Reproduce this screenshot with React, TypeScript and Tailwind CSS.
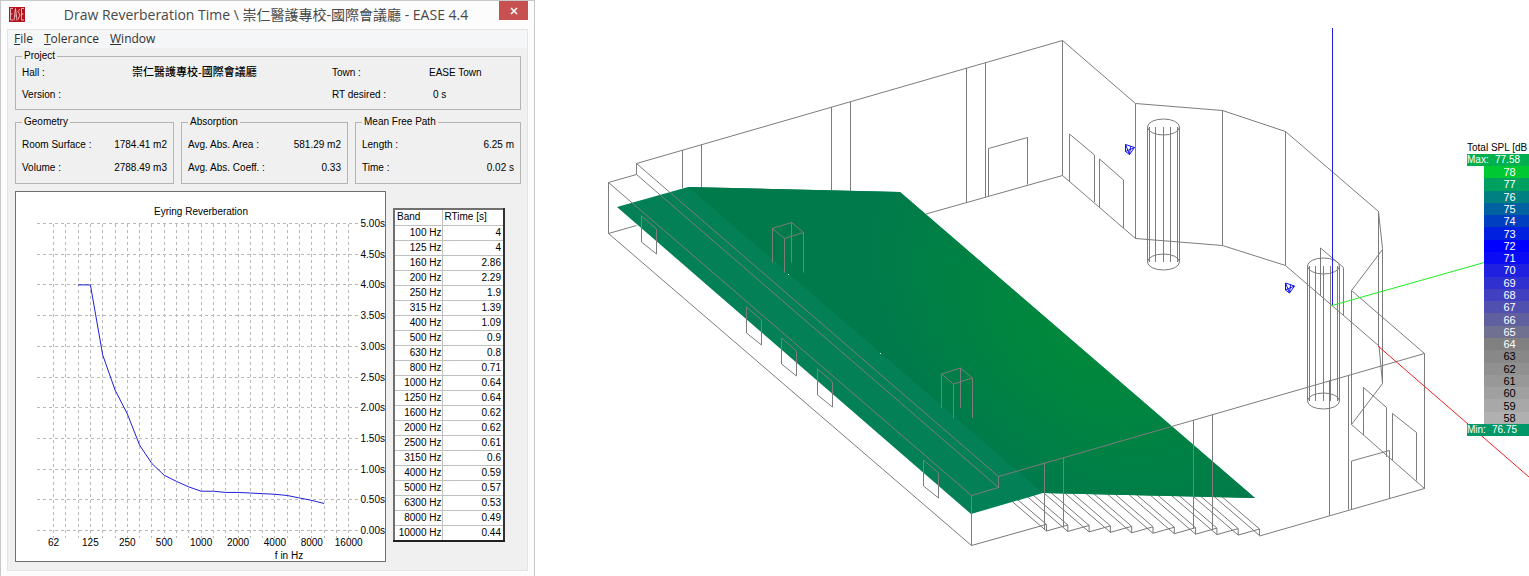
import React from 'react';

interface Field {
  label: string;
  value: string;
}

interface Band {
  freq: string;
  time: number;
}

interface Level {
  db: number;
  className: string;
}

const menus = ['File', 'Tolerance', 'Window'];

const bands: Band[] = [
  { freq: '100', time: 4 },
  { freq: '125', time: 4 },
  { freq: '160', time: 2.86 },
  { freq: '200', time: 2.29 },
  { freq: '250', time: 1.9 },
  { freq: '315', time: 1.39 },
  { freq: '400', time: 1.09 },
  { freq: '500', time: 0.9 },
  { freq: '630', time: 0.8 },
  { freq: '800', time: 0.71 },
  { freq: '1000', time: 0.64 },
  { freq: '1250', time: 0.64 },
  { freq: '1600', time: 0.62 },
  { freq: '2000', time: 0.62 },
  { freq: '2500', time: 0.61 },
  { freq: '3150', time: 0.6 },
  { freq: '4000', time: 0.59 },
  { freq: '5000', time: 0.57 },
  { freq: '6300', time: 0.53 },
  { freq: '8000', time: 0.49 },
  { freq: '10000', time: 0.44 }
];

const octaves = ['62', '125', '250', '500', '1000', '2000', '4000', '8000', '16000'];

const levels: Level[] = [
  { db: 78, className: 'bg-[#00c832] text-white' },
  { db: 77, className: 'bg-[#00a060] text-white' },
  { db: 76, className: 'bg-[#008080] text-white' },
  { db: 75, className: 'bg-[#0060a0] text-white' },
  { db: 74, className: 'bg-[#0040c0] text-white' },
  { db: 73, className: 'bg-[#0020e0] text-white' },
  { db: 72, className: 'bg-[#0000ff] text-white' },
  { db: 71, className: 'bg-[#0c0cf4] text-white' },
  { db: 70, className: 'bg-[#2020e0] text-white' },
  { db: 69, className: 'bg-[#3030d0] text-white' },
  { db: 68, className: 'bg-[#4040c0] text-white' },
  { db: 67, className: 'bg-[#5050b0] text-white' },
  { db: 66, className: 'bg-[#6060a0] text-white' },
  { db: 65, className: 'bg-[#707090] text-white' },
  { db: 64, className: 'bg-[#808080] text-white' },
  { db: 63, className: 'bg-[#888888] text-black' },
  { db: 62, className: 'bg-[#909090] text-black' },
  { db: 61, className: 'bg-[#989898] text-black' },
  { db: 60, className: 'bg-[#a0a0a0] text-black' },
  { db: 59, className: 'bg-[#a8a8a8] text-black' },
  { db: 58, className: 'bg-[#b0b0b0] text-black' }
];

// Chart scale: third-octave steps on x, seconds on y
const chartX = (step: number) => 37.5 + step * 12.3;
const chartY = (seconds: number) => 338.5 - seconds * 61.4;

const Group = ({ title, fields }: { title: string; fields: Field[] }) => (
  <fieldset className="border border-[#b4b4b4] px-1.5 pb-1">
    <legend className="px-0.5 leading-[10px]">{title}</legend>
    <dl className="pt-1.5">
      {fields.map((field) => (
        <div key={field.label} className="flex h-[23px] items-center justify-between">
          <dt>{field.label}</dt>
          <dd>{field.value}</dd>
        </div>
      ))}
    </dl>
  </fieldset>
);

const ReverbChart = () => (
  <svg viewBox="0 0 369 369" className="block w-full" fontSize="10">
    <text x="185" y="23" textAnchor="middle">Eyring Reverberation</text>
    <g stroke="#b8b8b8" strokeDasharray="3 3" shapeRendering="crispEdges">
      {Array.from({ length: 11 }, (_, i) => (
        <line key={i} x1="21" x2="344" y1={chartY(i / 2)} y2={chartY(i / 2)} />
      ))}
      {Array.from({ length: 25 }, (_, i) => (
        <line key={i} x1={chartX(i)} x2={chartX(i)} y1="32" y2="346" />
      ))}
    </g>
    {Array.from({ length: 11 }, (_, i) => (
      <text key={i} x="369" y={chartY(i / 2) + 3.5} textAnchor="end">
        {(i / 2).toFixed(2)}s
      </text>
    ))}
    {octaves.map((octave, i) => (
      <text key={octave} x={chartX(i * 3)} y="354" textAnchor="middle">{octave}</text>
    ))}
    <text x="273" y="367" textAnchor="middle">f in Hz</text>
    <polyline
      points={bands.map((band, i) => `${chartX(i + 2)},${chartY(band.time)}`).join(' ')}
      fill="none"
      stroke="#2020d8"
    />
  </svg>
);

const BandTable = () => (
  <table className="mt-[17px] h-[334px] w-28 shrink-0 border-collapse border-2 border-t-[#707070] border-r-[#303030] border-b-[#202020] border-l-[#707070] bg-white">
    <thead>
      <tr className="h-4">
        <th className="w-12 border border-[#c0c0c0] px-0.5 py-0 text-left leading-[14px] font-normal">Band</th>
        <th className="border border-[#c0c0c0] px-0.5 py-0 text-left leading-[14px] font-normal">RTime [s]</th>
      </tr>
    </thead>
    <tbody>
      {bands.map((band) => (
        <tr key={band.freq} className="h-[15px]">
          <td className="border border-[#c0c0c0] px-0 py-0 text-right leading-[14px] whitespace-nowrap">{band.freq} Hz</td>
          <td className="border border-[#c0c0c0] px-0.5 py-0 text-right leading-[14px]">{band.time}</td>
        </tr>
      ))}
    </tbody>
  </table>
);

const Column = ({ x, top, bottom }: { x: number; top: number; bottom: number }) => (
  <g>
    <ellipse cx={x} cy={top} rx="16" ry="8" />
    <ellipse cx={x} cy={bottom} rx="16" ry="8" />
    {[-16, -14, -8, 0, 7, 14, 16].map((dx) => (
      <line key={dx} x1={x + dx} x2={x + dx} y1={top} y2={bottom} />
    ))}
  </g>
);

const HallModel = () => (
  <svg viewBox="535 0 994 576" className="block w-full" role="img" aria-label="Hall model">
    <defs>
      <radialGradient
        id="spl"
        gradientUnits="userSpaceOnUse"
        cx="0"
        cy="0"
        r="1"
        gradientTransform="translate(1075 343) rotate(40.7) scale(250 140)"
      >
        <stop offset="0" stopColor="#00893b" />
        <stop offset="0.35" stopColor="#008540" />
        <stop offset="1" stopColor="#007a4b" />
      </radialGradient>
    </defs>

    {/* Stairs, running up under the audience area */}
    <g fill="none" stroke="#787878">
      <path d="M971.5 545.5L1046 524.5" />
      {Array.from({ length: 11 }, (_, i) => {
        const x = 1046.5 + i * 21.3;
        const y = 524.5 + i * 0.45;
        return (
          <path
            key={i}
            d={`M${x - 50} ${y - 43}L${x} ${y}V${y + 6.5}L${x - 50} ${y - 36.5}M${x} ${y + 6.5}${i < 10 ? `L${x + 21.3} ${y + 0.5}` : ''}`}
          />
        );
      })}
    </g>

    {/* Audience area */}
    <polygon points="617,207 688,187 900,192 1255,498 1043,493 971,514" fill="#038056" />
    <polygon points="688,187 900,192 1255,498 1043,493" fill="url(#spl)" />
    <g fill="#d8ffe8">
      <rect x="788" y="274" width="1" height="1" />
      <rect x="880" y="353" width="1" height="1" />
    </g>

    <g fill="none" stroke="#7c7c7c">
      {/* Left side */}
      <path d="M636.5 225.5L608.5 233.5V182.5L636.5 174.5V163.5L1062.5 40.5V175.5L926 214" />
      <path d="M608.5 233.5L971.5 545.5V495.5L608.5 182.5" />
      <path d="M636.5 163.5L998.5 476.5V487.5L971.5 495.5M636.5 174.5L998.5 487.5" />
      <path d="M682.5 150V188M701.5 144.5V187M831.5 107V190M850.5 101.5V191M966.5 68V202M985.5 62.5V197" />
      <path d="M988.5 196V148.5L1027.5 137.5V184.5" />
      {[
        [641.5, 216],
        [746.5, 307],
        [781.5, 338],
        [817.5, 369],
        [923.5, 460]
      ].map(([x, y]) => (
        <path key={x} d={`M${x} ${y}L${x + 15} ${y + 13}V${y + 38}L${x} ${y + 26}Z`} />
      ))}
      {/* Pillars */}
      {[
        [772.5, 228.5],
        [941.5, 374]
      ].map(([x, y]) => (
        <path
          key={x}
          d={`M${x} ${y + 34}V${y}L${x + 19} ${y - 6}L${x + 31} ${y + 4}L${x + 12} ${y + 10}L${x} ${y}M${x + 19} ${y - 6}V${y + 34}M${x + 31} ${y + 4}V${y + 44}M${x + 12} ${y + 10}V${y + 44}`}
        />
      ))}

      {/* Stage wall */}
      <path d="M1062.5 40.5L1135.5 103.5L1222.5 110.5L1285.5 131.5L1378.5 211.5L1382.5 248.5V383.5" />
      <path d="M1062.5 175.5L1135.5 238.5L1222.5 245.5L1285.5 265.5L1379 346L1382.5 383.5" />
      <path d="M1135.5 103.5V238.5M1222.5 110.5V245.5M1285.5 131.5V265.5M1378.5 211.5V346" />
      <path d="M1069.5 182V134L1094.5 155V202M1099.5 207V159L1123.5 180V228" />
      <path d="M1320.5 296V248L1343.5 267.5V315" />
      <Column x={1163.5} top={127} bottom={262} />
      <Column x={1323.5} top={266} bottom={401} />

      {/* Right side */}
      <path d="M998.5 476.5L1424.5 353.5V488.5L1259.5 536" />
      <path d="M1382.5 249.5L1351.5 290.5V424.5L1382.5 383.5M1351.5 290.5L1424.5 353.5M1351.5 424.5L1424.5 488.5" />
      <path d="M1363.5 435V387.5L1386.5 407.5V457M1392.5 460.5V413.5L1416.5 432.5V480.5" />
      <path d="M1351.5 509V461L1389.5 450.5V498" />
      <path d="M1329.5 380V515.5M1348.5 375V509.5" />
      <path d="M1044.5 462.5V530M1063.5 457V527M1193.5 420V528M1212.5 414V530" />
    </g>

    {/* Axes */}
    <path d="M1332.5 28V305" stroke="#2020e0" />
    <path d="M1332 305.5L1486 262" stroke="#20f020" />
    <path d="M1378 346L1529 477" stroke="#f02020" />

    {/* Loudspeakers */}
    {[
      [1125.5, 144.5],
      [1285.5, 283]
    ].map(([x, y]) => (
      <path
        key={x}
        d={`M${x} ${y}L${x + 9} ${y + 3}L${x + 4} ${y + 10}L${x} ${y + 7}ZL${x + 4} ${y + 10}M${x} ${y + 7}L${x + 9} ${y + 3}M${x + 5} ${y + 2}L${x + 4} ${y + 10}`}
        fill="none"
        stroke="#1010e8"
      />
    ))}
  </svg>
);

const SplLegend = () => (
  <div className="absolute top-[142px] right-0 w-[62px] overflow-hidden leading-3 whitespace-nowrap">
    <div>Total SPL [dB</div>
    <div className="flex h-3 bg-[#00b04e] text-white">
      <span className="w-7">Max:</span>
      <span>77.58</span>
    </div>
    <div className="ml-[17px] grid h-[258px] auto-rows-fr">
      {levels.map((level) => (
        <div key={level.db} className={`flex items-center justify-center pl-1.5 text-[11px] ${level.className}`}>
          {level.db}
        </div>
      ))}
    </div>
    <div className="flex h-3 bg-[#009868] text-white">
      <span className="w-[25px]">Min:</span>
      <span>76.75</span>
    </div>
  </div>
);

const App = () => {
  return (
    <main className="flex items-start bg-white font-['Liberation_Sans','Noto_Sans_CJK_TC',sans-serif] text-[10px] text-black">
      {/* Reverberation window */}
      <section className="w-[535px] shrink-0 border border-[#c8c8c8] bg-[#fcfcfc] px-1.5 pb-1.5">
        <header className="flex h-7 items-start">
          <svg viewBox="0 0 16 15" className="mt-1.5 ml-0.5 h-[15px] w-4">
            <rect width="16" height="15" fill="#b3141d" />
            <path
              d="M4 1.5H1.5V13H4M1.5 7H3.5M5 13.5L6.5 1.5L8 13.5M5.5 9H7.5M11 2L9 4.5L11 8L9 12.5M15 1.5H12.5V13H15M12.5 7H14.5"
              fill="none"
              stroke="#f6d8da"
              strokeWidth="0.8"
            />
          </svg>
          <h1 className="flex-1 pt-1 pl-2 text-center font-['Open_Sans','Noto_Sans_CJK_TC',sans-serif] text-sm leading-5 text-[#484848]">
            Draw Reverberation Time \ 崇仁醫護專校-國際會議廳 - EASE 4.4
          </h1>
          <button
            aria-label="Close"
            className="flex h-[19px] w-[29px] items-center justify-center bg-[#c75050]"
          >
            <svg viewBox="0 0 8 8" className="h-2 w-2">
              <path d="M1 1L7 7M7 1L1 7" stroke="#fff" strokeWidth="1.6" />
            </svg>
          </button>
        </header>

        <div className="border border-[#e4e4e4] bg-[#f0f0f0]">
          <nav className="flex h-[18px] items-center gap-[11px] bg-[#f5f6f8] pl-1.5 font-['Open_Sans',sans-serif] text-xs leading-4 text-[#303030]">
            {menus.map((menu) => (
              <button key={menu}>
                <span className="underline">{menu[0]}</span>
                {menu.slice(1)}
              </button>
            ))}
          </nav>

          <div className="flex flex-col gap-[7px] pt-[3px] pr-1.5 pb-2 pl-[7px]">
            <fieldset className="border border-[#b4b4b4] px-1.5 pb-1">
              <legend className="px-0.5 leading-[10px]">Project</legend>
              <dl className="grid grid-cols-[110px_200px_97px_1fr] auto-rows-[22px] items-center">
                <dt>Hall :</dt>
                <dd className="text-[11px] font-medium">崇仁醫護專校-國際會議廳</dd>
                <dt>Town :</dt>
                <dd>EASE Town</dd>
                <dt>Version :</dt>
                <dd />
                <dt>RT desired :</dt>
                <dd className="pl-1">0 s</dd>
              </dl>
            </fieldset>

            <div className="grid grid-cols-[159fr_167fr_166fr] gap-[7px]">
              <Group
                title="Geometry"
                fields={[
                  { label: 'Room Surface :', value: '1784.41 m2' },
                  { label: 'Volume :', value: '2788.49 m3' }
                ]}
              />
              <Group
                title="Absorption"
                fields={[
                  { label: 'Avg. Abs. Area :', value: '581.29 m2' },
                  { label: 'Avg. Abs. Coeff. :', value: '0.33' }
                ]}
              />
              <Group
                title="Mean Free Path"
                fields={[
                  { label: 'Length :', value: '6.25 m' },
                  { label: 'Time :', value: '0.02 s' }
                ]}
              />
            </div>

            <div className="flex items-start gap-[7px] pr-4">
              <div className="min-w-0 flex-1 border border-[#707070] bg-white">
                <ReverbChart />
              </div>
              <BandTable />
            </div>
          </div>
        </div>
      </section>

      {/* Hall model with sound level map */}
      <section className="relative min-w-0 flex-1">
        <HallModel />
        <SplLegend />
      </section>
    </main>
  );
};

export default App;
